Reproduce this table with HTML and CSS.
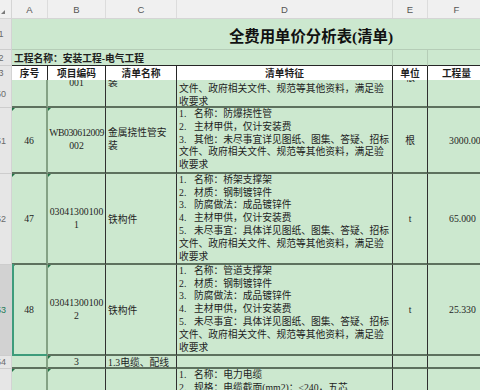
FILE: index.html
```html
<!DOCTYPE html>
<html lang="zh-CN">
<head>
<meta charset="utf-8">
<title>全费用单价分析表(清单)</title>
<link rel="stylesheet" href="styles.css">
</head>
<body>
<div class="sheet">
  <div class="grid colhead">
    <div class="corner"></div>
    <div class="ch">A</div>
    <div class="ch">B</div>
    <div class="ch">C</div>
    <div class="ch">D</div>
    <div class="ch">E</div>
    <div class="ch">F</div>
    <div class="ch"></div>
  </div>

  <div class="grid r1">
    <div class="rh"><span class="rn">1</span></div>
    <div class="title">全费用单价分析表(清单)</div>
  </div>

  <div class="grid r2">
    <div class="rh"><span class="rn">2</span></div>
    <div class="hc info">工程名称：安装工程-电气工程</div>
    <div class="hc"></div>
    <div class="hc"></div>
    <div class="hc"></div>
  </div>

  <div class="grid r3">
    <div class="rh"><span class="rn">3</span></div>
    <div class="th">序号</div>
    <div class="th">项目编码</div>
    <div class="th">清单名称</div>
    <div class="th">清单特征</div>
    <div class="th">单位</div>
    <div class="th">工程量</div>
  </div>

  <div class="pane">
    <div class="rows">
      <div class="grid h50">
        <div class="rh clip"><span class="rn">50</span></div>
        <div class="c a"></div>
        <div class="c b t"><div><div class="ln wb">WB030612009</div><div class="ln">001</div></div></div>
        <div class="c cn"><div><div class="ln">金属挠性管安</div><div class="ln">装</div></div></div>
        <div class="c d"><div>
          <div class="ln"><span class="n">1.</span>名称：金属软管</div>
          <div class="ln"><span class="n">2.</span>主材甲供，仅计安装费</div>
          <div class="ln"><span class="n">3.</span>其他：未尽事宜详见图纸、图集、答疑、招标</div>
          <div class="ln">文件、政府相关文件、规范等其他资料，满足验</div>
          <div class="ln">收要求</div>
        </div></div>
        <div class="c e">根</div>
        <div class="c f"></div>
      </div>

      <div class="grid h51">
        <div class="rh"><span class="rn">51</span></div>
        <div class="c a t">46</div>
        <div class="c b t"><div><div class="ln wb">WB030612009</div><div class="ln">002</div></div></div>
        <div class="c cn"><div><div class="ln">金属挠性管安</div><div class="ln">装</div></div></div>
        <div class="c d"><div>
          <div class="ln"><span class="n">1.</span>名称：防爆挠性管</div>
          <div class="ln"><span class="n">2.</span>主材甲供，仅计安装费</div>
          <div class="ln"><span class="n">3.</span>其他：未尽事宜详见图纸、图集、答疑、招标</div>
          <div class="ln">文件、政府相关文件、规范等其他资料，满足验</div>
          <div class="ln">收要求</div>
        </div></div>
        <div class="c e">根</div>
        <div class="c f">3000.00</div>
      </div>

      <div class="grid h52">
        <div class="rh"><span class="rn">52</span></div>
        <div class="c a t">47</div>
        <div class="c b t"><div><div class="ln">03041300100</div><div class="ln">1</div></div></div>
        <div class="c cn">铁构件</div>
        <div class="c d"><div>
          <div class="ln"><span class="n">1.</span>名称：桥架支撑架</div>
          <div class="ln"><span class="n">2.</span>材质：钢制镀锌件</div>
          <div class="ln"><span class="n">3.</span>防腐做法：成品镀锌件</div>
          <div class="ln"><span class="n">4.</span>主材甲供，仅计安装费</div>
          <div class="ln"><span class="n">5.</span>未尽事宜：具体详见图纸、图集、答疑、招标</div>
          <div class="ln">文件、政府相关文件、规范等其他资料，满足验</div>
          <div class="ln">收要求</div>
        </div></div>
        <div class="c e">t</div>
        <div class="c f">65.000</div>
      </div>

      <div class="grid h53">
        <div class="rh on"><span class="rn">53</span></div>
        <div class="c a t sel">48</div>
        <div class="c b t"><div><div class="ln">03041300100</div><div class="ln">2</div></div></div>
        <div class="c cn">铁构件</div>
        <div class="c d"><div>
          <div class="ln"><span class="n">1.</span>名称：管道支撑架</div>
          <div class="ln"><span class="n">2.</span>材质：钢制镀锌件</div>
          <div class="ln"><span class="n">3.</span>防腐做法：成品镀锌件</div>
          <div class="ln"><span class="n">4.</span>主材甲供，仅计安装费</div>
          <div class="ln"><span class="n">5.</span>未尽事宜：具体详见图纸、图集、答疑、招标</div>
          <div class="ln">文件、政府相关文件、规范等其他资料，满足验</div>
          <div class="ln">收要求</div>
        </div></div>
        <div class="c e">t</div>
        <div class="c f">25.330</div>
      </div>

      <div class="grid h54">
        <div class="rh"><span class="rn">54</span></div>
        <div class="c a"></div>
        <div class="c b t">3</div>
        <div class="c cn">1.3电缆、配线</div>
        <div class="c d"></div>
        <div class="c e"></div>
        <div class="c f"></div>
      </div>

      <div class="grid h55">
        <div class="rh"><span class="rn">55</span></div>
        <div class="c a t">49</div>
        <div class="c b t"><div><div class="ln">03041100400</div><div class="ln">1</div></div></div>
        <div class="c cn">电力电缆</div>
        <div class="c d"><div>
          <div class="ln"><span class="n">1.</span>名称：电力电缆</div>
          <div class="ln"><span class="n">2.</span>规格：电缆截面(mm2)：≤240，五芯</div>
          <div class="ln"><span class="n">3.</span>敷设方式：综合考虑</div>
          <div class="ln"><span class="n">4.</span>主材甲供，仅计安装费</div>
          <div class="ln"><span class="n">5.</span>未尽事宜：具体详见图纸、图集、答疑、招标</div>
          <div class="ln">文件、政府相关文件、规范等其他资料，满足验</div>
          <div class="ln">收要求</div>
        </div></div>
        <div class="c e">m</div>
        <div class="c f">1200.00</div>
      </div>
    </div>
  </div>
</div>
</body>
</html>
```

FILE: styles.css
```css
* {
  box-sizing: border-box;
  margin: 0;
  padding: 0;
}

html,
body {
  width: 480px;
  height: 390px;
  overflow: hidden;
  background: #ffffff;
}

body {
  font-family: "Liberation Serif", "Noto Sans CJK SC", serif;
  font-size: 9.75px;
  color: #1e1e1e;
}

.sheet {
  width: 610px;
}

.grid {
  display: grid;
  grid-template-columns: 12px 36px 58px 71px 216px 35px 58px 124px;
}

/* column header */
.colhead {
  height: 19px;
  background: #f0f0f0;
  border-bottom: 1px solid #d5d5d5;
  font-family: "Liberation Sans", sans-serif;
  font-size: 9.5px;
  color: #555555;
}

.corner {
  position: relative;
  border-right: 1px solid #d5d5d5;
}

.corner::after {
  content: "";
  position: absolute;
  left: 1px;
  top: 10px;
  border-left: 4px solid transparent;
  border-bottom: 4px solid #7a7a7a;
}

.ch {
  display: flex;
  align-items: center;
  justify-content: center;
  padding-top: 1px;
  border-right: 1px solid #dcdcdc;
}

/* row header */
.rh {
  display: flex;
  align-items: center;
  overflow: hidden;
  background: #e6e6e6;
  border-right: 1px solid #d3d3d3;
  border-bottom: 1px solid #cdcdcd;
  font-family: "Liberation Sans", sans-serif;
  font-size: 9px;
  color: #6a6a6a;
}

.rn {
  flex: none;
  width: 24px;
  margin-left: -11px;
  text-align: center;
}

.rh.on {
  background: #d2d2d2;
  color: #1e7b57;
}

.rh.clip {
  padding-top: 33px;
}

/* row 1: title */
.r1 {
  height: 31px;
}

.title {
  grid-column: 2 / -1;
  display: flex;
  align-items: center;
  justify-content: center;
  padding-top: 2px;
  background: #cce8cf;
  border-bottom: 1px solid #b5cdb7;
  font-size: 15.4px;
  font-weight: 700;
  color: #111111;
}

/* row 2: project name */
.r2 {
  height: 16px;
}

.hc {
  display: flex;
  align-items: center;
  background: #cce8cf;
  border-right: 1px solid #b5cdb7;
  border-bottom: 1px solid #262626;
  font-weight: 700;
  white-space: nowrap;
}

.info {
  grid-column: 2 / 6;
  padding-left: 2px;
}

/* row 3: table header */
.r3 {
  height: 14px;
}

.th {
  display: flex;
  align-items: center;
  justify-content: center;
  background: #ffffff;
  border-right: 1px solid #262626;
  border-bottom: 1px solid #262626;
  font-weight: 700;
  white-space: nowrap;
}

/* scrolled pane */
.pane {
  height: 310px;
  overflow: hidden;
}

.rows {
  margin-top: -33px;
}

.h50 { height: 61px; }
.h51 { height: 66px; }
.h52 { height: 91px; }
.h53 { height: 91px; }
.h54 { height: 13px; }
.h55 { height: 91px; }

.c {
  position: relative;
  display: flex;
  align-items: center;
  background: #cce8cf;
  border-right: 1px solid #303030;
  border-bottom: 2px solid #5d715e;
  white-space: nowrap;
  overflow: hidden;
}

.c.a {
  justify-content: center;
  border-right: 2px solid #84a285;
  overflow: visible;
}

.c.b {
  justify-content: center;
  text-align: center;
}

.c.cn,
.c.d {
  padding-left: 2px;
}

.c.e {
  justify-content: center;
}

.c.f {
  padding-left: 21px;
}

.ln {
  height: 12.8px;
  line-height: 12.8px;
  white-space: nowrap;
}

.n {
  display: inline-block;
  width: 15px;
}

.wb {
  letter-spacing: -0.45px;
}

/* green "number stored as text" markers */
.t::before {
  content: "";
  position: absolute;
  left: 0;
  top: 0;
  border-top: 3px solid #217346;
  border-right: 3px solid transparent;
}

/* active cell */
.sel::after {
  content: "";
  position: absolute;
  left: 0;
  top: -1px;
  right: -1px;
  bottom: -2px;
  border-left: 2px solid #3d9c7b;
  border-bottom: 2px solid #3d9c7b;
}
```
